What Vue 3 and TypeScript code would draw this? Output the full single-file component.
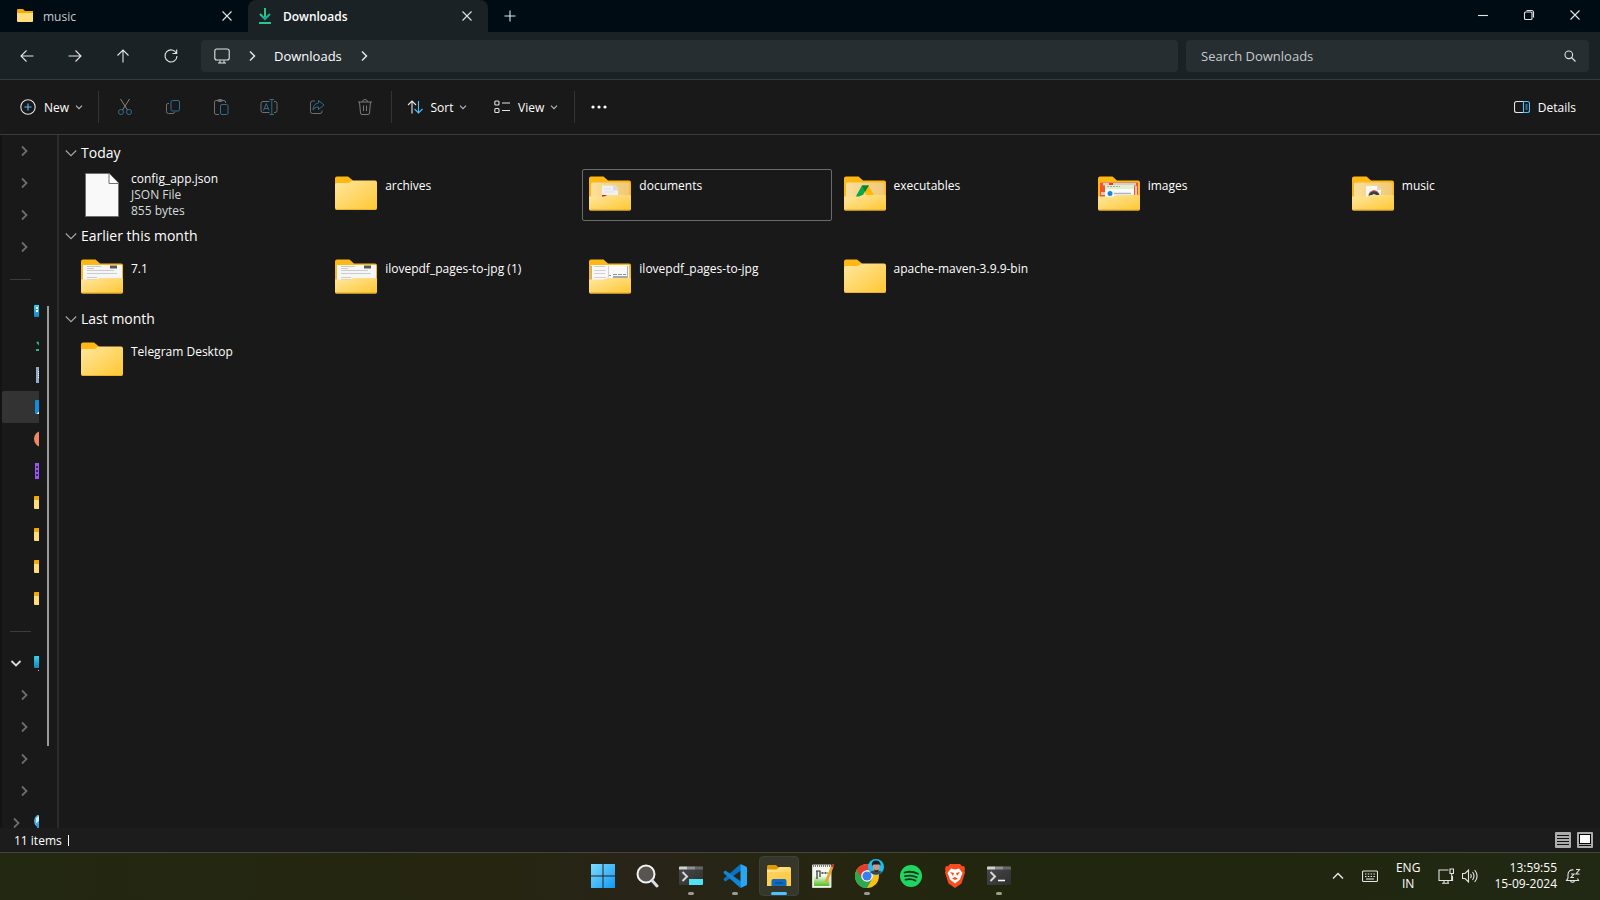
<script setup lang="ts">
import { ref } from 'vue'

interface Item {
  name: string
  icon: string
  details?: string[]
  focused?: boolean
}
interface Group {
  title: string
  items: Item[]
}

const groups: Group[] = [
  {
    title: 'Today',
    items: [
      { name: 'config_app.json', icon: 'file', details: ['JSON File', '855 bytes'] },
      { name: 'archives', icon: 'folder' },
      { name: 'documents', icon: 'documents', focused: true },
      { name: 'executables', icon: 'executables' },
      { name: 'images', icon: 'images' },
      { name: 'music', icon: 'music' },
    ],
  },
  {
    title: 'Earlier this month',
    items: [
      { name: '7.1', icon: 'scan' },
      { name: 'ilovepdf_pages-to-jpg (1)', icon: 'scan' },
      { name: 'ilovepdf_pages-to-jpg', icon: 'pages' },
      { name: 'apache-maven-3.9.9-bin', icon: 'folder' },
    ],
  },
  { title: 'Last month', items: [{ name: 'Telegram Desktop', icon: 'folder' }] },
]

interface NavRow {
  kind: 'child' | 'pin' | 'line' | 'root'
  icon?: string
  open?: boolean
  selected?: boolean
  label?: string
}
const navRows: NavRow[] = [
  { kind: 'child', label: 'Expand folder' },
  { kind: 'child', label: 'Expand folder' },
  { kind: 'child', label: 'Expand folder' },
  { kind: 'child', label: 'Expand folder' },
  { kind: 'line' },
  { kind: 'pin', icon: 'n-desktop' },
  { kind: 'pin', icon: 'n-download' },
  { kind: 'pin', icon: 'n-docs' },
  { kind: 'pin', icon: 'n-pics', selected: true },
  { kind: 'pin', icon: 'n-music' },
  { kind: 'pin', icon: 'n-video' },
  { kind: 'pin', icon: 'n-folder' },
  { kind: 'pin', icon: 'n-folder' },
  { kind: 'pin', icon: 'n-folder' },
  { kind: 'pin', icon: 'n-folder' },
  { kind: 'line' },
  { kind: 'root', icon: 'n-pc', label: 'This PC', open: true },
  { kind: 'child', label: 'Expand drive' },
  { kind: 'child', label: 'Expand drive' },
  { kind: 'child', label: 'Expand drive' },
  { kind: 'child', label: 'Expand drive' },
  { kind: 'root', icon: 'n-network', label: 'Network' },
]

const edits = [
  { id: 'cut', label: 'Cut' },
  { id: 'copy', label: 'Copy' },
  { id: 'paste', label: 'Paste' },
  { id: 'rename', label: 'Rename' },
  { id: 'share', label: 'Share' },
  { id: 'trash', label: 'Delete' },
]

const apps = [
  { id: 'windows', label: 'Start' },
  { id: 'finder', label: 'Search' },
  { id: 'shell', label: 'Windows Terminal', running: true },
  { id: 'code', label: 'Visual Studio Code', running: true },
  { id: 'explorer', label: 'File Explorer', active: true },
  { id: 'notepad', label: 'Notepad++' },
  { id: 'chrome', label: 'Google Chrome', running: true },
  { id: 'spotify', label: 'Spotify' },
  { id: 'brave', label: 'Brave' },
  { id: 'console', label: 'Terminal', running: true },
]

const query = ref('')
</script>

<template>
  <div class="screen">
    <svg class="defs" aria-hidden="true">
      <defs>
        <linearGradient id="gFolder" x1="0" y1="0" x2="1" y2="1">
          <stop offset="0" stop-color="#ffe7a2" />
          <stop offset="1" stop-color="#ffc730" />
        </linearGradient>
        <linearGradient id="gInner" x1="0" y1="0" x2="1" y2="0">
          <stop offset="0" stop-color="#fbdf9b" />
          <stop offset="1" stop-color="#f0c877" />
        </linearGradient>
        <linearGradient id="gWin" x1="0" y1="0" x2="24" y2="24" gradientUnits="userSpaceOnUse">
          <stop offset="0" stop-color="#7fdcff" />
          <stop offset="1" stop-color="#1098f7" />
        </linearGradient>
        <linearGradient id="gDown" x1="0" y1="0" x2="1" y2="1">
          <stop offset="0" stop-color="#2bd08a" />
          <stop offset="1" stop-color="#129a9a" />
        </linearGradient>
        <linearGradient id="gNote" x1="0" y1="0" x2="0" y2="1">
          <stop offset="0.4" stop-color="#f6f9ee" />
          <stop offset="1" stop-color="#4fbf1c" />
        </linearGradient>
        <linearGradient id="gTerm" x1="0" y1="0" x2="1" y2="1">
          <stop offset="0" stop-color="#4a4a4a" />
          <stop offset="1" stop-color="#2e2e2e" />
        </linearGradient>
        <linearGradient id="gTeal" x1="0" y1="0" x2="0" y2="1">
          <stop offset="0" stop-color="#37d3e8" />
          <stop offset="1" stop-color="#1583c4" />
        </linearGradient>

        <symbol id="back-part" viewBox="0 0 42 36">
          <path d="M0 3.5A2 2 0 0 1 2 1.500H14.500L19 5.500H40A2 2 0 0 1 42 7.500V33H0Z" fill="#fdb813" />
          <path d="M2 9A1.500 1.500 0 0 1 3.500 7.500H39A1.500 1.500 0 0 1 40.500 9V24H2Z" fill="url(#gInner)" />
        </symbol>
        <symbol id="front-part" viewBox="0 0 42 36">
          <path d="M0 21.500H15L18.500 20H40.500A1.500 1.500 0 0 1 42 21.500V34A1.500 1.500 0 0 1 40.500 35.500H1.500A1.500 1.500 0 0 1 0 34Z" fill="url(#gFolder)" />
          <path d="M.5 34.500A1.500 1.500 0 0 0 1.500 35H40.500A1.500 1.500 0 0 0 41.500 34" fill="none" stroke="#e0a526" />
        </symbol>

        <symbol id="folder" viewBox="0 0 42 36">
          <path d="M0 3.500A2 2 0 0 1 2 1.500H13L18 5.500V12H0Z" fill="#fdb813" />
          <path d="M0 10A2 2 0 0 1 2 8H13.500L18 5.500H40A2 2 0 0 1 42 7.500V33A2 2 0 0 1 40 35H2A2 2 0 0 1 0 33Z" fill="url(#gFolder)" />
          <path d="M.5 33A1.500 1.500 0 0 0 2 34.500H40A1.500 1.500 0 0 0 41.500 33" fill="none" stroke="#f0b02b" />
        </symbol>
        <symbol id="documents" viewBox="0 0 42 36">
          <use href="#back-part" />
          <path d="M13 10.500H24A5 5 0 0 1 29 15.500V24H13Z" fill="#eef0f2" />
          <path d="M24 10.500A5 5 0 0 1 29 15.500H24Z" fill="#d9dcdf" />
          <path d="M15 14H22M15 17H25" stroke="#dfe2e5" />
          <path d="M13 20H18V22H13Z" fill="#e0182a" />
          <use href="#front-part" />
        </symbol>
        <symbol id="executables" viewBox="0 0 42 36">
          <use href="#back-part" />
          <path d="M18 10.500H25L17.500 22H11.500Z" fill="#0aa84c" />
          <path d="M24.500 10.500L30 20H22.500L20.500 16.500Z" fill="#ffba00" />
          <path d="M18 10.500H25L21 17Z" fill="#0c7f37" />
          <use href="#front-part" />
        </symbol>
        <symbol id="images" viewBox="0 0 42 36">
          <use href="#back-part" />
          <path d="M2 7.500H40V22H2Z" fill="#f4562f" />
          <path d="M5 8H38V10.500H5Z" fill="#ccd2d2" />
          <path d="M11 8H15V10H11Z" fill="#e13c2c" />
          <path d="M3 17H7V20H3ZM37 11H39V20H37Z" fill="#e9c5bd" />
          <path d="M7 10H36V22H7Z" fill="#fafcf8" />
          <path d="M7 10H36V14H7Z" fill="#e2efcf" />
          <path d="M9 11.500H22" stroke="#9aae84" stroke-dasharray="2 1" />
          <circle cx="12" cy="18.500" r="2.500" fill="#1683dd" />
          <path d="M16 18.500H33" stroke="#a9b4c3" stroke-width="1.500" />
          <use href="#front-part" />
        </symbol>
        <symbol id="music" viewBox="0 0 42 36">
          <use href="#back-part" />
          <path d="M14 11H25L29 15V24H14Z" fill="#f7f7f7" />
          <path d="M25 11V15H29Z" fill="#d4d4d4" />
          <circle cx="22" cy="21" r="5.500" fill="#3a3d42" />
          <path d="M17 19A5.500 5.500 0 0 1 26.500 18" fill="none" stroke="#d6694a" />
          <circle cx="22" cy="21" r="2" fill="#e9e2da" />
          <use href="#front-part" />
        </symbol>
        <symbol id="scan" viewBox="0 0 42 36">
          <use href="#back-part" />
          <path d="M2 7H41V23H2Z" fill="#f6f6f6" />
          <path d="M6 8.500H20M6 10.500H13M6 12.500H33M6 15.500H36M6 19.500H16M6 21.500H37" stroke="#c9cbcd" />
          <path d="M29 7.500H36V10.500H29Z" fill="#55585c" />
          <use href="#front-part" />
        </symbol>
        <symbol id="pages" viewBox="0 0 42 36">
          <use href="#back-part" />
          <path d="M2 7H40V23H2Z" fill="#f8f8f8" />
          <path d="M5 8.500H16M5 12.500H17M5 15.500H16M5 19.500H17" stroke="#cfd1d4" />
          <path d="M19.500 8V18A4 4 0 0 1 15 22" stroke="#d0d0d0" fill="none" />
          <path d="M20 17.500H22" stroke="#999" />
          <path d="M24 16.500H37" stroke="#8d9196" stroke-dasharray="4 1" />
          <path d="M24 19H38" stroke="#787d82" stroke-width="1.300" />
          <path d="M38.500 8V20M2.500 8V22" stroke="#aeb2b6" />
          <use href="#front-part" />
        </symbol>
        <symbol id="file" viewBox="0 0 42 44">
          <path d="M4.500.5H28L37.500 10V43.500H4.500Z" fill="#f9f9f9" stroke="#6f6f6f" />
          <path d="M28 .5V10.500H37.500" fill="#fff" stroke="#6f6f6f" />
        </symbol>

        <symbol id="chev-r" viewBox="0 0 12 12"><path d="M4 1.500L8.500 6L4 10.500" /></symbol>
        <symbol id="chev-d" viewBox="0 0 12 12"><path d="M1.500 4L6 8.500L10.500 4" /></symbol>
        <symbol id="chev-wide" viewBox="0 0 12 12"><path d="M.8 3.500L6 8.700L11.200 3.500" /></symbol>
        <symbol id="cross" viewBox="0 0 12 12"><path d="M1.500 1.500L10.500 10.500M10.500 1.500L1.500 10.500" /></symbol>

        <symbol id="n-desktop" viewBox="0 0 16 16">
          <rect x="0" y="2" width="16" height="12" rx="1" fill="url(#gTeal)" />
          <path d="M2 4H4V6H2ZM2 7H4V9H2Z" fill="#fff" />
        </symbol>
        <symbol id="n-download" viewBox="0 0 16 16">
          <path d="M8 1V11M3 7L8 12L13 7M2 15H14" fill="none" stroke="#21b98a" stroke-width="2" />
        </symbol>
        <symbol id="n-docs" viewBox="0 0 16 16">
          <rect x="2" y="0" width="12" height="16" fill="#91a9c6" />
          <path d="M4.500 4V11" stroke="#fff" stroke-dasharray="1 1" />
        </symbol>
        <symbol id="n-pics" viewBox="0 0 16 16">
          <rect x="1" y="1" width="14" height="14" rx="1" fill="#168adb" />
          <path d="M2.500 15L8 9.500L13.500 15Z" fill="#f2f8fc" />
        </symbol>
        <symbol id="n-music" viewBox="0 0 16 16"><circle cx="8" cy="8" r="8" fill="#ee8763" /></symbol>
        <symbol id="n-video" viewBox="0 0 16 16">
          <rect x="1" y="0" width="14" height="16" fill="#9a55f4" />
          <path d="M2 3H4V5H2ZM2 7H4V9H2ZM2 11H4V13H2Z" fill="#40236f" />
        </symbol>
        <symbol id="n-folder" viewBox="0 0 16 16">
          <path d="M0 2A1 1 0 0 1 1 1H6L8 3H16V13H0Z" fill="#f7a900" />
          <path d="M0 5H16V13A1 1 0 0 1 15 14H1A1 1 0 0 1 0 13Z" fill="#ffdc7c" />
        </symbol>
        <symbol id="n-pc" viewBox="0 0 16 16">
          <rect x="0" y="1" width="16" height="12" rx="1" fill="url(#gTeal)" />
          <path d="M4 15.500H12" stroke="#b7c4cc" />
        </symbol>
        <symbol id="n-network" viewBox="0 0 16 16">
          <circle cx="7" cy="6" r="7" fill="#4ba9df" />
          <path d="M2 3L5 1V6L2 8Z" fill="#d6f0fb" />
          <path d="M3 9H14V15H3Z" fill="#2d9ed6" />
        </symbol>

        <symbol id="cut" viewBox="0 0 16 16">
          <path d="M3.500 0L10.500 11M12.500 0L5.500 11" stroke="#858585" />
          <circle cx="4" cy="13" r="2.500" stroke="#2b6f92" />
          <circle cx="12" cy="13" r="2.500" stroke="#2b6f92" />
        </symbol>
        <symbol id="copy" viewBox="0 0 16 16">
          <path d="M4 4.500H3A1.500 1.500 0 0 0 1.500 6V12.500A2 2 0 0 0 3.500 14.500H8A1.500 1.500 0 0 0 9.500 13" stroke="#6f6f6f" />
          <rect x="6" y="1.500" width="8.500" height="10.500" rx="1.500" stroke="#2b6f92" />
        </symbol>
        <symbol id="paste" viewBox="0 0 16 16">
          <path d="M6 15.500H3A1.500 1.500 0 0 1 1.500 14V3A1.500 1.500 0 0 1 3 1.500H11A1.500 1.500 0 0 1 12.500 3V4" stroke="#6f6f6f" />
          <rect x="4.500" y=".5" width="5" height="2" rx="1" stroke="#6f6f6f" />
          <rect x="7.500" y="5.500" width="7.500" height="10" rx="1.500" stroke="#2b6f92" />
        </symbol>
        <symbol id="rename" viewBox="0 0 18 16">
          <path d="M9.500 2.500H3A2 2 0 0 0 1 4.500V11.500A2 2 0 0 0 3 13.500H9.500M14 2.500H15A2 2 0 0 1 17 4.500V11.500A2 2 0 0 1 15 13.500H14" stroke="#6f6f6f" />
          <path d="M9.500.5H14M11.800.5V15.500M9.500 15.500H14M3.500 11.500L6.300 4.500L9 11.500M4.500 9.500H8" stroke="#2b6f92" />
        </symbol>
        <symbol id="share" viewBox="0 0 16 16">
          <path d="M6 2H3.500A2 2 0 0 0 1.500 4V12.500A2 2 0 0 0 3.500 14.500H11A2 2 0 0 0 13 12.500V11.500" stroke="#6f6f6f" />
          <path d="M9.500 1.500L15 6L9.500 10.500V8C6.500 8 5 9 4 11C4 7 6 4.500 9.500 4Z" stroke="#2b6f92" />
        </symbol>
        <symbol id="trash" viewBox="0 0 16 16">
          <path d="M1 3H15M5.500 3A2.500 2.500 0 0 1 10.500 3M2.500 3L3.500 14A1.500 1.500 0 0 0 5 15.500H11A1.500 1.500 0 0 0 12.500 14L13.500 3M6.500 6.500V12M9.500 6.500V12" stroke="#7a7a7a" />
        </symbol>

        <symbol id="windows" viewBox="0 0 24 24">
          <path d="M0 0H11.500V11.500H0ZM12.500 0H24V11.500H12.500ZM0 12.500H11.500V24H0ZM12.500 12.500H24V24H12.500Z" fill="url(#gWin)" />
        </symbol>
        <symbol id="finder" viewBox="0 0 24 24">
          <circle cx="11" cy="10" r="8.500" fill="#56554f" stroke="#f2f2f2" stroke-width="2" />
          <path d="M17 16.500L22 22" stroke="#d9dde6" stroke-width="3" stroke-linecap="round" />
        </symbol>
        <symbol id="shell" viewBox="0 0 24 24">
          <rect x="0" y="2.500" width="24" height="18.500" rx="1" fill="url(#gTerm)" />
          <path d="M0 5.500V3.500A1 1 0 0 1 1 2.500H8V5.500Z" fill="#d0d0d0" />
          <path d="M8 2.500H16V5.500H8Z" fill="#8f8f8f" />
          <path d="M16 2.500H23A1 1 0 0 1 24 3.500V5.500H16Z" fill="#666" />
          <path d="M3.500 8L8 12.500L3.500 17" fill="none" stroke="#d8d8d8" stroke-width="2" />
          <path d="M10 15H24V20A1 1 0 0 1 23 21H10Z" fill="#4fe3f7" />
        </symbol>
        <symbol id="console" viewBox="0 0 24 24">
          <rect x="0" y="2.500" width="24" height="18.500" rx="1" fill="url(#gTerm)" />
          <path d="M0 5.500V3.500A1 1 0 0 1 1 2.500H8V5.500Z" fill="#d0d0d0" />
          <path d="M8 2.500H16V5.500H8Z" fill="#8f8f8f" />
          <path d="M16 2.500H23A1 1 0 0 1 24 3.500V5.500H16Z" fill="#666" />
          <path d="M3.500 8L8 12.500L3.500 17" fill="none" stroke="#d8d8d8" stroke-width="2" />
          <path d="M11 16.500H18" stroke="#f4f4f4" stroke-width="1.600" />
        </symbol>
        <symbol id="code" viewBox="0 0 24 24">
          <path d="M17.500 0L1 14.500Q0 15.500 1 16.500L2.500 17.500L18 6.500Z" fill="#0a72c0" />
          <path d="M17.500 24L1 9.500Q0 8.500 1 7.500L2.500 6.500L18 17.500Z" fill="#1285d6" />
          <path d="M17.500 0L23 2.500Q24 3 24 4V20Q24 21 23 21.500L17.500 24Z" fill="#29a5f5" />
        </symbol>
        <symbol id="explorer" viewBox="0 0 24 24">
          <path d="M0 2.500A1.500 1.500 0 0 1 1.500 1H9L11.500 3.500V9H0Z" fill="#dd9a05" />
          <path d="M0 5.500H9.500L12 3H22.500A1.500 1.500 0 0 1 24 4.500V22H0Z" fill="url(#gFolder)" />
          <path d="M0 8H24V22H0Z" fill="#ffcb43" opacity=".7" />
          <path d="M4.500 17A2 2 0 0 1 6.500 15H17.500A2 2 0 0 1 19.500 17V22H4.500Z" fill="#0f6bbd" />
          <path d="M8 19H16" stroke="#0a4c8f" stroke-width="1.200" />
        </symbol>
        <symbol id="notepad" viewBox="0 0 24 24">
          <path d="M1.500 1H20V23.500H1.500Z" fill="#f4f6f0" stroke="#d6d6d6" />
          <path d="M3 5H18.500V22H3Z" fill="url(#gNote)" />
          <path d="M2 2H19" stroke="#555" stroke-width="1.500" stroke-dasharray="1 1" />
          <path d="M6 7V15M5 7H9V13" fill="none" stroke="#303030" stroke-width="1.200" />
          <path d="M10.500 9H17" stroke="#303030" stroke-width="1.500" stroke-dasharray="2 1" />
          <path d="M21.500 2L15 18" stroke="#e9a32a" stroke-width="2.600" />
          <path d="M22.300 0L21 3" stroke="#b63b32" stroke-width="2.600" />
        </symbol>
        <symbol id="chrome" viewBox="0 0 30 30">
          <circle cx="13" cy="17" r="12" fill="#fbc116" />
          <path d="M13 17L2.600 11A12 12 0 0 0 13 29L18.500 19.500Z" fill="#2da94f" />
          <path d="M2.600 11A12 12 0 0 1 23.400 11H13L8 19.500Z" fill="#e33b2e" />
          <circle cx="13" cy="17" r="5.800" fill="#fff" />
          <circle cx="13" cy="17" r="4.600" fill="#3b7df0" />
          <circle cx="22" cy="8" r="8" fill="#1fbcf0" />
          <path d="M16 13Q18 11.500 20 11.500H24Q27 12 28 13A8 8 0 0 1 16 13Z" fill="#3d4652" />
          <path d="M19 5H25.500V9.500Q25 13 22.200 13T19 9.500Z" fill="#c69a86" />
          <path d="M18 7Q17 1.500 22 1.500T26.500 7L25.500 5.500H19.500Z" fill="#1b1b20" />
          <path d="M20 10.500Q22 12 24.800 10.500L24 13H20.500Z" fill="#33282a" />
        </symbol>
        <symbol id="spotify" viewBox="0 0 24 24">
          <circle cx="12" cy="12" r="11" fill="#1ed760" />
          <path d="M5.500 8.500Q12.500 6.500 19 9.800M6 12.200Q12.500 10.500 17.800 13.200M6.500 15.700Q12 14.300 16.500 16.600" fill="none" stroke="#14361d" stroke-width="1.800" stroke-linecap="round" />
        </symbol>
        <symbol id="brave" viewBox="0 0 24 24">
          <path d="M7 0H17L19 2.200L21 2L22 4.500L21.500 7L22 8.500L18.500 19.500L12 24L5.500 19.500L2 8.500L2.500 7L2 4.500L3 2L5 2.200Z" fill="#fb4a1c" />
          <path d="M8 4.500L12 5.500L16 4.500L19.500 9L18 12.500L17 15.500L12 19.500L7 15.500L6 12.500L4.500 9Z" fill="#fff" />
          <path d="M7 8L11 9L10 12ZM17 8L13 9L14 12ZM9 14.500L12 13L15 14.500L12 16Z" fill="#fb4a1c" />
        </symbol>
      </defs>
    </svg>

    <header class="titlebar">
      <div class="tab">
        <svg class="i16"><use href="#n-folder" /></svg>
        <span class="tab-name">music</span>
        <button class="tab-close" aria-label="Close music tab"><svg class="line i12"><use href="#cross" /></svg></button>
      </div>
      <div class="tab active">
        <svg class="i16" viewBox="0 0 16 16">
          <path d="M7 0H9V9H7Z" fill="#27c78b" />
          <path d="M3 6L8 11L13 6" fill="none" stroke="url(#gDown)" stroke-width="2" />
          <path d="M2 14H14V16H2Z" fill="#27c78b" />
        </svg>
        <span class="tab-name">Downloads</span>
        <button class="tab-close" aria-label="Close Downloads tab"><svg class="line i12"><use href="#cross" /></svg></button>
      </div>
      <button class="new-tab" aria-label="New tab">
        <svg class="line i12" viewBox="0 0 12 12"><path d="M6 .5V11.500M.5 6H11.500" /></svg>
      </button>
      <div class="window-buttons">
        <button aria-label="Minimize"><svg class="line i12" viewBox="0 0 12 12"><path d="M1 6.500H11" /></svg></button>
        <button aria-label="Restore">
          <svg class="line i12" viewBox="0 0 12 12"><rect x="1.500" y="3" width="7.500" height="7.500" rx="1" /><path d="M3.500 1.500H8.500A2 2 0 0 1 10.500 3.500V8.500" /></svg>
        </button>
        <button aria-label="Close"><svg class="line i12"><use href="#cross" /></svg></button>
      </div>
    </header>

    <nav class="navbar" aria-label="Navigation">
      <div class="nav-buttons">
        <button aria-label="Back"><svg class="line i16" viewBox="0 0 16 16"><path d="M14.500 8H2M7.500 2.500L2 8L7.500 13.500" /></svg></button>
        <button aria-label="Forward"><svg class="line i16" viewBox="0 0 16 16"><path d="M1.500 8H14M8.500 2.500L14 8L8.500 13.500" /></svg></button>
        <button aria-label="Up"><svg class="line i16" viewBox="0 0 16 16"><path d="M8 14.500V2M2.500 7.500L8 2L13.500 7.500" /></svg></button>
        <button aria-label="Refresh"><svg class="line i16" viewBox="0 0 16 16"><path d="M13.500 5.500A6 6 0 1 0 14 8M13.700 1.500V5.500H9.500" /></svg></button>
      </div>
      <div class="address">
        <svg class="line i16" viewBox="0 0 16 16"><rect x=".8" y="1" width="14.400" height="11" rx="2" /><path d="M6 12.500V14.500M10 12.500V14.500M4 15H12" /></svg>
        <svg class="line i12 bold"><use href="#chev-r" /></svg>
        <a href="#">Downloads</a>
        <svg class="line i12 bold"><use href="#chev-r" /></svg>
      </div>
      <label class="search">
        <input v-model="query" type="text" aria-label="Search Downloads" placeholder="Search Downloads" />
        <svg class="line i12" viewBox="0 0 12 12"><circle cx="4.800" cy="4.800" r="3.800" /><path d="M7.500 7.500L11.500 11.500" /></svg>
      </label>
    </nav>

    <div class="toolbar" role="toolbar" aria-label="Commands">
      <button class="new">
        <svg class="line i16" viewBox="0 0 16 16"><circle cx="8" cy="8" r="7.200" /><path d="M8 4.500V11.500M4.500 8H11.500" stroke="#4cc2ff" /></svg>
        <span>New</span><svg class="line i8"><use href="#chev-d" /></svg>
      </button>
      <i class="sep"></i>
      <button v-for="e in edits" :key="e.id" class="edit" :aria-label="e.label" disabled>
        <svg class="glyph"><use :href="'#' + e.id" /></svg>
      </button>
      <i class="sep"></i>
      <button class="sort">
        <svg class="line i16" viewBox="0 0 16 16"><path d="M5 14.500V2M1 6L5 2L9 6" /><path d="M11.500 2V14M7.500 10L11.500 14L15.500 10" stroke="#4cc2ff" /></svg>
        <span>Sort</span><svg class="line i8"><use href="#chev-d" /></svg>
      </button>
      <button class="view">
        <svg class="line i16" viewBox="0 0 16 16"><rect x=".8" y="2" width="4.200" height="4" rx="1" /><rect x=".8" y="9.500" width="4.200" height="4" rx="1" /><path d="M8 4H16M8 11.500H16" /></svg>
        <span>View</span><svg class="line i8"><use href="#chev-d" /></svg>
      </button>
      <i class="sep"></i>
      <button class="more" aria-label="See more">
        <svg class="i16" viewBox="0 0 16 16"><circle cx="2" cy="8" r="1.600" /><circle cx="8" cy="8" r="1.600" /><circle cx="14" cy="8" r="1.600" /></svg>
      </button>
      <button class="details">
        <svg class="line i16" viewBox="0 0 16 16"><path d="M9.500 2.500H2.500A2 2 0 0 0 .5 4.500V11.500A2 2 0 0 0 2.500 13.500H9.500" /><path d="M9.500 2.500H13.500A2 2 0 0 1 15.500 4.500V11.500A2 2 0 0 1 13.500 13.500H9.500ZM11.500 6H13.500M11.500 8H13.500M11.500 10H13.500" stroke="#4cc2ff" /></svg>
        <span>Details</span>
      </button>
    </div>

    <div class="body">
      <aside class="sidebar">
        <div class="tree">
          <div v-for="(r, n) in navRows" :key="n" class="row" :class="[r.kind, { selected: r.selected }]">
            <hr v-if="r.kind === 'line'" />
            <button v-else-if="r.kind === 'child'" class="twist" :aria-label="r.label"><svg class="line i12"><use href="#chev-r" /></svg></button>
            <template v-else>
              <button v-if="r.kind === 'root'" class="twist" :class="{ open: r.open }" :aria-label="r.label">
                <svg class="line i12"><use :href="r.open ? '#chev-d' : '#chev-r'" /></svg>
              </button>
              <svg class="i16 place"><use :href="'#' + r.icon" /></svg>
            </template>
          </div>
        </div>
        <div class="rail"><div class="thumb"></div></div>
      </aside>

      <main class="files">
        <section v-for="g in groups" :key="g.title">
          <h2><svg class="line i12"><use href="#chev-wide" /></svg>{{ g.title }}</h2>
          <ul>
            <li v-for="i in g.items" :key="i.name" :class="{ focused: i.focused, tall: i.details }">
              <svg class="thumbnail"><use :href="'#' + i.icon" /></svg>
              <div class="meta">
                <p>{{ i.name }}</p>
                <p v-for="d in i.details" :key="d" class="sub">{{ d }}</p>
              </div>
            </li>
          </ul>
        </section>
      </main>
    </div>

    <footer class="status">
      <span class="count">11 items</span>
      <i class="tick"></i>
      <button class="mode" aria-label="Details view">
        <svg viewBox="0 0 16 16"><rect width="16" height="16" rx="1" fill="#adadad" /><path d="M2 3.500H14M2 6.500H14M2 9.500H14M2 12.500H14" stroke="#111" /></svg>
      </button>
      <button class="mode" aria-label="Large icons view">
        <svg viewBox="0 0 16 16"><rect width="16" height="16" rx="1" fill="#adadad" /><rect x="2.500" y="2.500" width="11" height="9" fill="#fff" stroke="#000" /><path d="M2 13.500H14" stroke="#111" /></svg>
      </button>
    </footer>

    <div class="taskbar">
      <span></span>
      <div class="apps">
        <button v-for="a in apps" :key="a.id" class="app" :class="{ active: a.active, running: a.running }" :aria-label="a.label">
          <svg :class="{ badged: a.id === 'chrome' }"><use :href="'#' + a.id" /></svg>
        </button>
      </div>
      <div class="tray">
        <button aria-label="Show hidden icons"><svg class="line i12 bold" viewBox="0 0 12 12"><path d="M1 8.500L6 3.500L11 8.500" /></svg></button>
        <button class="keyboard" aria-label="Touch keyboard">
          <svg class="line i16" viewBox="0 0 16 16"><rect x=".5" y="3" width="15" height="10.500" rx="1" /><path d="M3 6H13M3 8.500H13" stroke-dasharray="1.500 1.300" /><path d="M4 11H12" /></svg>
        </button>
        <button class="lang">ENG<br />IN</button>
        <button class="quick" aria-label="Network and volume">
          <svg class="line i16" viewBox="0 0 16 16"><path d="M10.500 2H1V12.500H14.500V8M6 12.500V15M10 12.500V15M4 15.200H11" /><path d="M12 1H15.500V5.500H12ZM13.700 5.500V12" /></svg>
          <svg class="line i16" viewBox="0 0 16 16"><path d="M.5 5.500H3L6.500 2V14L3 10.500H.5ZM8.500 6Q10 8 8.500 10M10.500 4Q13.500 8 10.500 12M12.700 2Q17.500 8 12.700 14" /></svg>
        </button>
        <button class="clock">13:59:55<br />15-09-2024</button>
        <button class="bell" aria-label="Notifications">
          <svg class="line i16" viewBox="0 0 16 16"><path d="M8.500 2A4.500 4.500 0 0 0 3 6.500V10L1.500 12.500H13.500L12.500 10.500M5.500 13A2.200 2.200 0 0 0 9.500 13M6 6H9L6 9.500H9M11 1.500H14.500L11 6H14.500" /></svg>
        </button>
      </div>
    </div>
  </div>
</template>

<style>
html,
body {
  background: #191919;
}
</style>

<style scoped>
.screen {
  height: 100vh;
  display: flex;
  flex-direction: column;
  overflow: hidden;
  background: #191919;
  color: #fff;
  font: 12px/16px 'Open Sans', 'Noto Sans', sans-serif;
}
.screen * {
  box-sizing: border-box;
}
.defs {
  position: absolute;
  width: 0;
  height: 0;
}
svg {
  display: block;
  flex: none;
}
button {
  padding: 0;
  border: 0;
  background: none;
  color: inherit;
  font: inherit;
  display: flex;
  align-items: center;
  justify-content: center;
}
.i16 {
  width: 16px;
  height: 16px;
}
.i12 {
  width: 12px;
  height: 12px;
}
.i8 {
  width: 8px;
  height: 8px;
}
.line {
  fill: none;
  stroke: #e4e4e4;
  stroke-width: 1.1;
}
.line.bold {
  stroke-width: 1.5;
}

.titlebar {
  display: flex;
  height: 32px;
  flex: none;
  background: #000c13;
}
.tab {
  display: flex;
  align-items: center;
  width: 240px;
  padding: 0 9px;
  border-radius: 8px 8px 0 0;
}
.tab:first-child {
  width: 248px;
  padding-left: 17px;
  color: #c5cacc;
}
.tab.active {
  background: #1b2225;
  font-weight: 600;
}
.tab-name {
  flex: 1;
  padding: 2px 0 0 10px;
}
.tab-close {
  width: 24px;
  height: 24px;
}
.new-tab {
  width: 44px;
}
.window-buttons {
  display: flex;
  margin-left: auto;
  padding: 0 2px 3px 0;
}
.window-buttons button {
  width: 46px;
}

.navbar {
  display: grid;
  grid-template-columns: 198px 977fr 411fr;
  align-items: center;
  height: 48px;
  flex: none;
  padding: 0 11px 0 3px;
  background: #1b2225;
  border-bottom: 1px solid #373b3d;
}
.nav-buttons {
  display: flex;
}
.nav-buttons button {
  width: 48px;
  height: 32px;
}
.address,
.search {
  display: flex;
  align-items: center;
  height: 32px;
  border-radius: 4px;
  background: #272e31;
  font-size: 13px;
  line-height: 20px;
}
.address {
  gap: 16px;
  padding-left: 13px;
}
.address a {
  color: #fff;
  text-decoration: none;
}
.search {
  margin-left: 8px;
  padding: 0 13px 0 15px;
}
.search input {
  flex: 1;
  min-width: 0;
  padding: 0;
  border: 0;
  outline: 0;
  background: none;
  color: #fff;
  font: inherit;
}
.search input::placeholder {
  color: #c8cbcc;
  opacity: 1;
}

.toolbar {
  display: flex;
  align-items: center;
  height: 55px;
  flex: none;
  padding: 0 12px;
  border-bottom: 1px solid #3a3a3a;
}
.toolbar > button {
  height: 32px;
  gap: 8px;
}
.toolbar span {
  padding-top: 2px;
}
.toolbar .i8 {
  margin-left: -2px;
  stroke: #bdbdbd;
  stroke-width: 1.6;
}
.sep {
  width: 1px;
  height: 32px;
  background: #333;
}
.toolbar > .new {
  width: 86px;
  justify-content: flex-start;
  padding-left: 8px;
}
.edit {
  width: 48px;
}
.edit:nth-of-type(2) {
  margin-left: 2px;
}
.edit:nth-of-type(7) {
  margin-right: 2px;
}
.glyph {
  width: 18px;
  height: 16px;
  fill: none;
}
.toolbar > .sort {
  width: 90px;
}
.toolbar > .view {
  width: 92px;
  justify-content: flex-start;
  padding-left: 12px;
}
.more {
  width: 48px;
}
.more svg {
  fill: #fff;
}
.details {
  margin-left: auto;
}
.toolbar > .details {
  padding-right: 12px;
}

.body {
  display: flex;
  flex: 1;
  min-height: 0;
}
.sidebar {
  display: flex;
  width: 59px;
  flex: none;
  border-right: 2px solid #2b2b2b;
  border-left: 2px solid #131313;
}
.tree {
  width: 37px;
  overflow: hidden;
}
.row {
  display: flex;
  align-items: center;
  height: 32px;
}
.row hr {
  width: 21px;
  height: 1px;
  margin: 0 0 0 8px;
  border: 0;
  background: #3c3c3c;
}
.twist {
  width: 12px;
  height: 24px;
  margin-left: 8px;
}
.twist .line {
  stroke: #6c6c6c;
  stroke-width: 1.8;
}
.twist.open .line {
  stroke: #ddd;
}
.child .twist {
  margin-left: 16px;
}
.pin .place {
  margin-left: 32px;
}
.root .place {
  margin-left: 12px;
}
.selected {
  background: #333;
  border-radius: 2px 0 0 2px;
}
.rail {
  flex: 1;
  padding: 171px 0 82px 8px;
}
.thumb {
  width: 2px;
  height: 100%;
  background: #9a9a9a;
}

.files {
  flex: 1;
  padding: 3px 6px 0;
}
.files section {
  height: 83px;
}
.files h2 {
  display: flex;
  align-items: center;
  gap: 4px;
  height: 30px;
  margin: 0 0 1px;
  font-size: 14px;
  font-weight: 400;
  line-height: 20px;
}
.files h2 .line {
  stroke: #a8a8a8;
}
.files ul {
  display: grid;
  grid-template-columns: repeat(6, 1fr);
  gap: 5px;
  margin: 0;
  padding: 0 0 0 9px;
  list-style: none;
}
.files li {
  display: flex;
  gap: 8px;
  height: 52px;
  padding: 5px 6px;
  border: 1px solid transparent;
  border-radius: 2px;
}
.files li.focused {
  border-color: #6b6b6b;
}
.files li.tall {
  align-items: center;
  padding: 1px 6px;
}
.thumbnail {
  width: 42px;
  height: 36px;
}
.tall .thumbnail {
  height: 44px;
}
.files p {
  margin: 0;
}
.files .meta {
  padding-top: 3px;
}
.files .tall .meta {
  padding-top: 0;
}
.files .sub {
  color: #d6dcdc;
}

.status {
  display: flex;
  align-items: center;
  gap: 6px;
  height: 24px;
  flex: none;
  padding: 0 7px 0 14px;
  background: #1c1c1c;
}
.count {
  padding-top: 2px;
}
.tick {
  width: 1px;
  height: 11px;
  margin-right: auto;
  background: #fff;
}
.mode svg {
  width: 16px;
  height: 16px;
}

.taskbar {
  display: grid;
  grid-template-columns: 1fr auto 1fr;
  align-items: center;
  height: 48px;
  flex: none;
  padding: 0 0 1px 2px;
  border-top: 1px solid #44463c;
  background: linear-gradient(90deg, #232812 0%, #242611 20%, #262512 32%, #282418 40%, #25260f 55%, #20260f 65%, #212813 100%);
}
.apps {
  display: flex;
  gap: 4px;
}
.app {
  position: relative;
  width: 40px;
  height: 40px;
  border-radius: 4px;
}
.app svg {
  width: 24px;
  height: 24px;
}
.app svg.badged {
  width: 30px;
  height: 30px;
  margin: 0 0 4px 4px;
}
.app.active {
  background: #34372a;
  border: 1px solid #3d4033;
}
.app.running::after,
.app.active::after {
  content: '';
  position: absolute;
  bottom: 1px;
  left: 50%;
  width: 6px;
  height: 3px;
  margin-left: -3px;
  border-radius: 2px;
  background: #9b9b93;
}
.app.active::after {
  bottom: 0;
  width: 16px;
  margin-left: -8px;
  background: #4cc2ff;
}
.tray {
  display: flex;
  align-items: center;
  justify-content: flex-end;
  padding-right: 19px;
}
.keyboard {
  margin-left: 18px;
}
.lang {
  margin-left: 18px;
}
.quick {
  gap: 8px;
  margin-left: 18px;
}
.clock {
  justify-content: flex-end;
  margin-left: 16px;
  text-align: right;
}
.bell {
  margin-left: 8px;
}
</style>
